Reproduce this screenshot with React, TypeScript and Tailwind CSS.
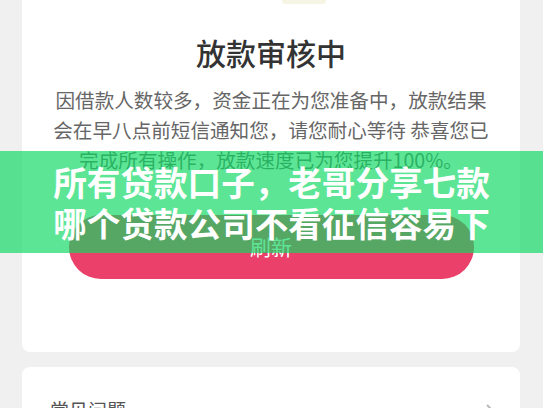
import React from "react";

export default function App() {
  return (
    <div
      className="relative w-[543px] h-[408px] overflow-hidden bg-[#f0f0f0]"
      style={{ fontFamily: '"Noto Sans CJK SC", "Noto Sans", sans-serif' }}
    >
      <div className="mx-[22px] w-[498px] bg-white rounded-b-[8px] flex flex-col items-center pb-[73px]">
        <div className="h-[4px] w-[44px] ml-[66px] rounded-b-full bg-[#f6f5e4]" />
        <div className="mt-[28px] text-[30px] leading-[40px] font-medium text-[#333333]">
          放款审核中
        </div>
        <div className="mt-[13px] text-[19.6px] leading-[30px] text-[#666666] text-center whitespace-nowrap">
          <div>因借款人数较多，资金正在为您准备中，放款结果</div>
          <div>会在早八点前短信通知您，请您耐心等待 恭喜您已</div>
          <div>完成所有操作，放款速度已为您提升100%。</div>
        </div>
        <div className="mt-[40px] w-[405px] h-[64px] rounded-full bg-[#ea4069] flex items-center justify-center text-white text-[21px]">
          刷新
        </div>
      </div>

      <div className="mt-[15px] mx-[22px] w-[498px] h-[80px] bg-white rounded-t-[8px] flex items-start justify-between pt-[30px] pl-[28px] pr-[23px]">
        <div className="text-[19px] leading-[26px] text-[#555555]">常见问题</div>
        <svg width="12" height="18" viewBox="0 0 12 18" className="mt-[6px]">
          <path d="M2 2 L9 9 L2 16" fill="none" stroke="#bbbbbb" strokeWidth="2" />
        </svg>
      </div>

      <div className="absolute left-0 top-[151px] w-[543px] h-[102px] bg-[rgba(14,216,98,0.67)] flex flex-col items-center justify-center text-white font-bold text-[33.6px] leading-[41px] whitespace-nowrap">
        <div>所有贷款口子，老哥分享七款</div>
        <div>哪个贷款公司不看征信容易下</div>
      </div>
    </div>
  );
}
